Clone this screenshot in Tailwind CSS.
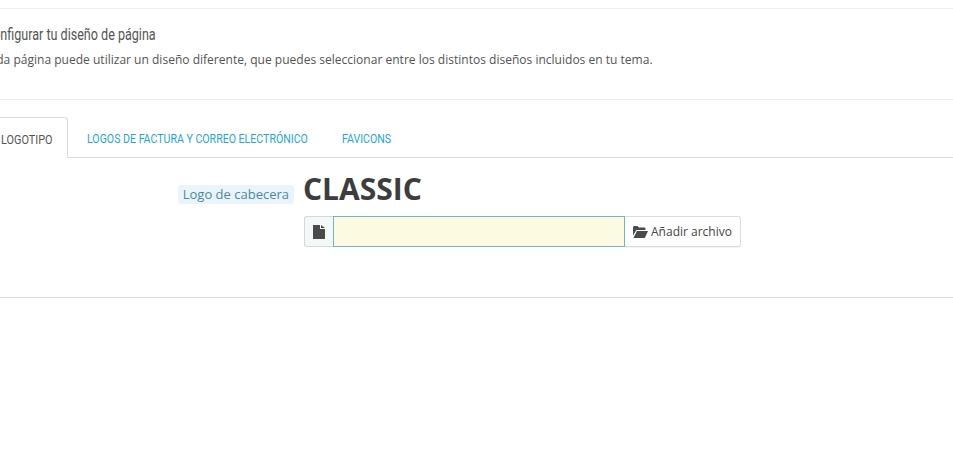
<!DOCTYPE html>
<html lang="es">
<head>
    <meta charset="UTF-8" />
    <title>Tema y logotipo</title>
    <script src="https://cdn.jsdelivr.net/npm/@tailwindcss/browser@4"></script>
</head>
<body class="bg-white overflow-hidden h-[476px] font-['Open_Sans',sans-serif] text-[#363a41]">

<div class="pt-2">
    <!-- cabecera de la sección -->
    <section class="border-t border-b border-[#eeeeee] h-[92px] pt-[16px]">
        <h2 class="-ml-[15px] text-[16px] leading-5 text-[#555] font-['Roboto',sans-serif] whitespace-nowrap origin-left scale-x-[.785]">Configurar tu diseño de página</h2>
        <p class="-ml-[18px] mt-[5px] text-[12.04px] leading-5 text-[#555] whitespace-nowrap">Cada página puede utilizar un diseño diferente, que puedes seleccionar entre los distintos diseños incluidos en tu tema.</p>
    </section>

    <!-- pestañas -->
    <nav class="flex mt-[17px] h-[41px] border-b border-[#dddddd] font-['Roboto',sans-serif] text-[12.5px] uppercase">
        <a class="flex items-center w-[68px] h-[41px] pl-[1px] pt-[4px] bg-white border border-l-0 border-b-0 border-[#dddddd] rounded-tr-[3px] text-[#555]"><span class="origin-left scale-x-[.87] whitespace-nowrap">Logotipo</span></a>
        <a class="flex items-center w-[221px] h-10 ml-[19px] pt-[4px] text-[#25a5dc]"><span class="origin-left scale-x-[.847] whitespace-nowrap">Logos de factura y correo electrónico</span></a>
        <a class="flex items-center w-[49px] h-10 ml-[34px] pt-[4px] text-[#25a5dc]"><span class="origin-left scale-x-[.847] whitespace-nowrap">Favicons</span></a>
    </nav>

    <!-- formulario -->
    <section class="flex h-[140px] border-b border-[#dddddd]">
        <div class="w-[304px] pt-[27px] pr-[10px] flex justify-end items-start">
            <span class="bg-[#e9f5fb] rounded-[3px] px-[5px] h-[19px] leading-[19px] text-[13px] text-[#4f87a8] whitespace-nowrap">Logo de cabecera</span>
        </div>
        <div class="pt-[12px]">
            <div class="-ml-[1px] text-[30px] leading-[38px] font-bold text-[#3d3d3d]">CLASSIC</div>
            <div class="flex mt-[8px] h-[31px] w-[437px]">
                <span class="flex items-center justify-center w-[29px] bg-[#f5f8f9] border border-r-0 border-[#d3d8db] rounded-l-[3px]">
                    <svg viewBox="0 0 12 14" class="w-3 h-3.5" fill="#4a4a4a"><path d="M0 0h7v4h5v10H0z"/><path d="M8 0l4 3H8z"/></svg>
                </span>
                <div class="w-[292px] bg-[#fcfbe2] border border-[#74b3cf]"></div>
                <button class="flex-1 flex items-center justify-center gap-[3px] bg-white border border-l-0 border-[#dddddd] rounded-r-[3px] text-[12px] text-[#444] shadow-[0_1px_1px_rgba(0,0,0,0.05)] whitespace-nowrap">
                    <svg viewBox="0 0 15 12" class="w-[15px] h-3" fill="#4a4a4a"><path d="M0 1.5C0 .7.6 0 1.4 0h3.2l1.2 1.5h5.4c.7 0 1.3.6 1.3 1.3V4H3.4L0 9.5z"/><path d="M3.9 5H15l-3.2 7H.5z"/></svg>
                    Añadir archivo
                </button>
            </div>
        </div>
    </section>
</div>

</body>
</html>
